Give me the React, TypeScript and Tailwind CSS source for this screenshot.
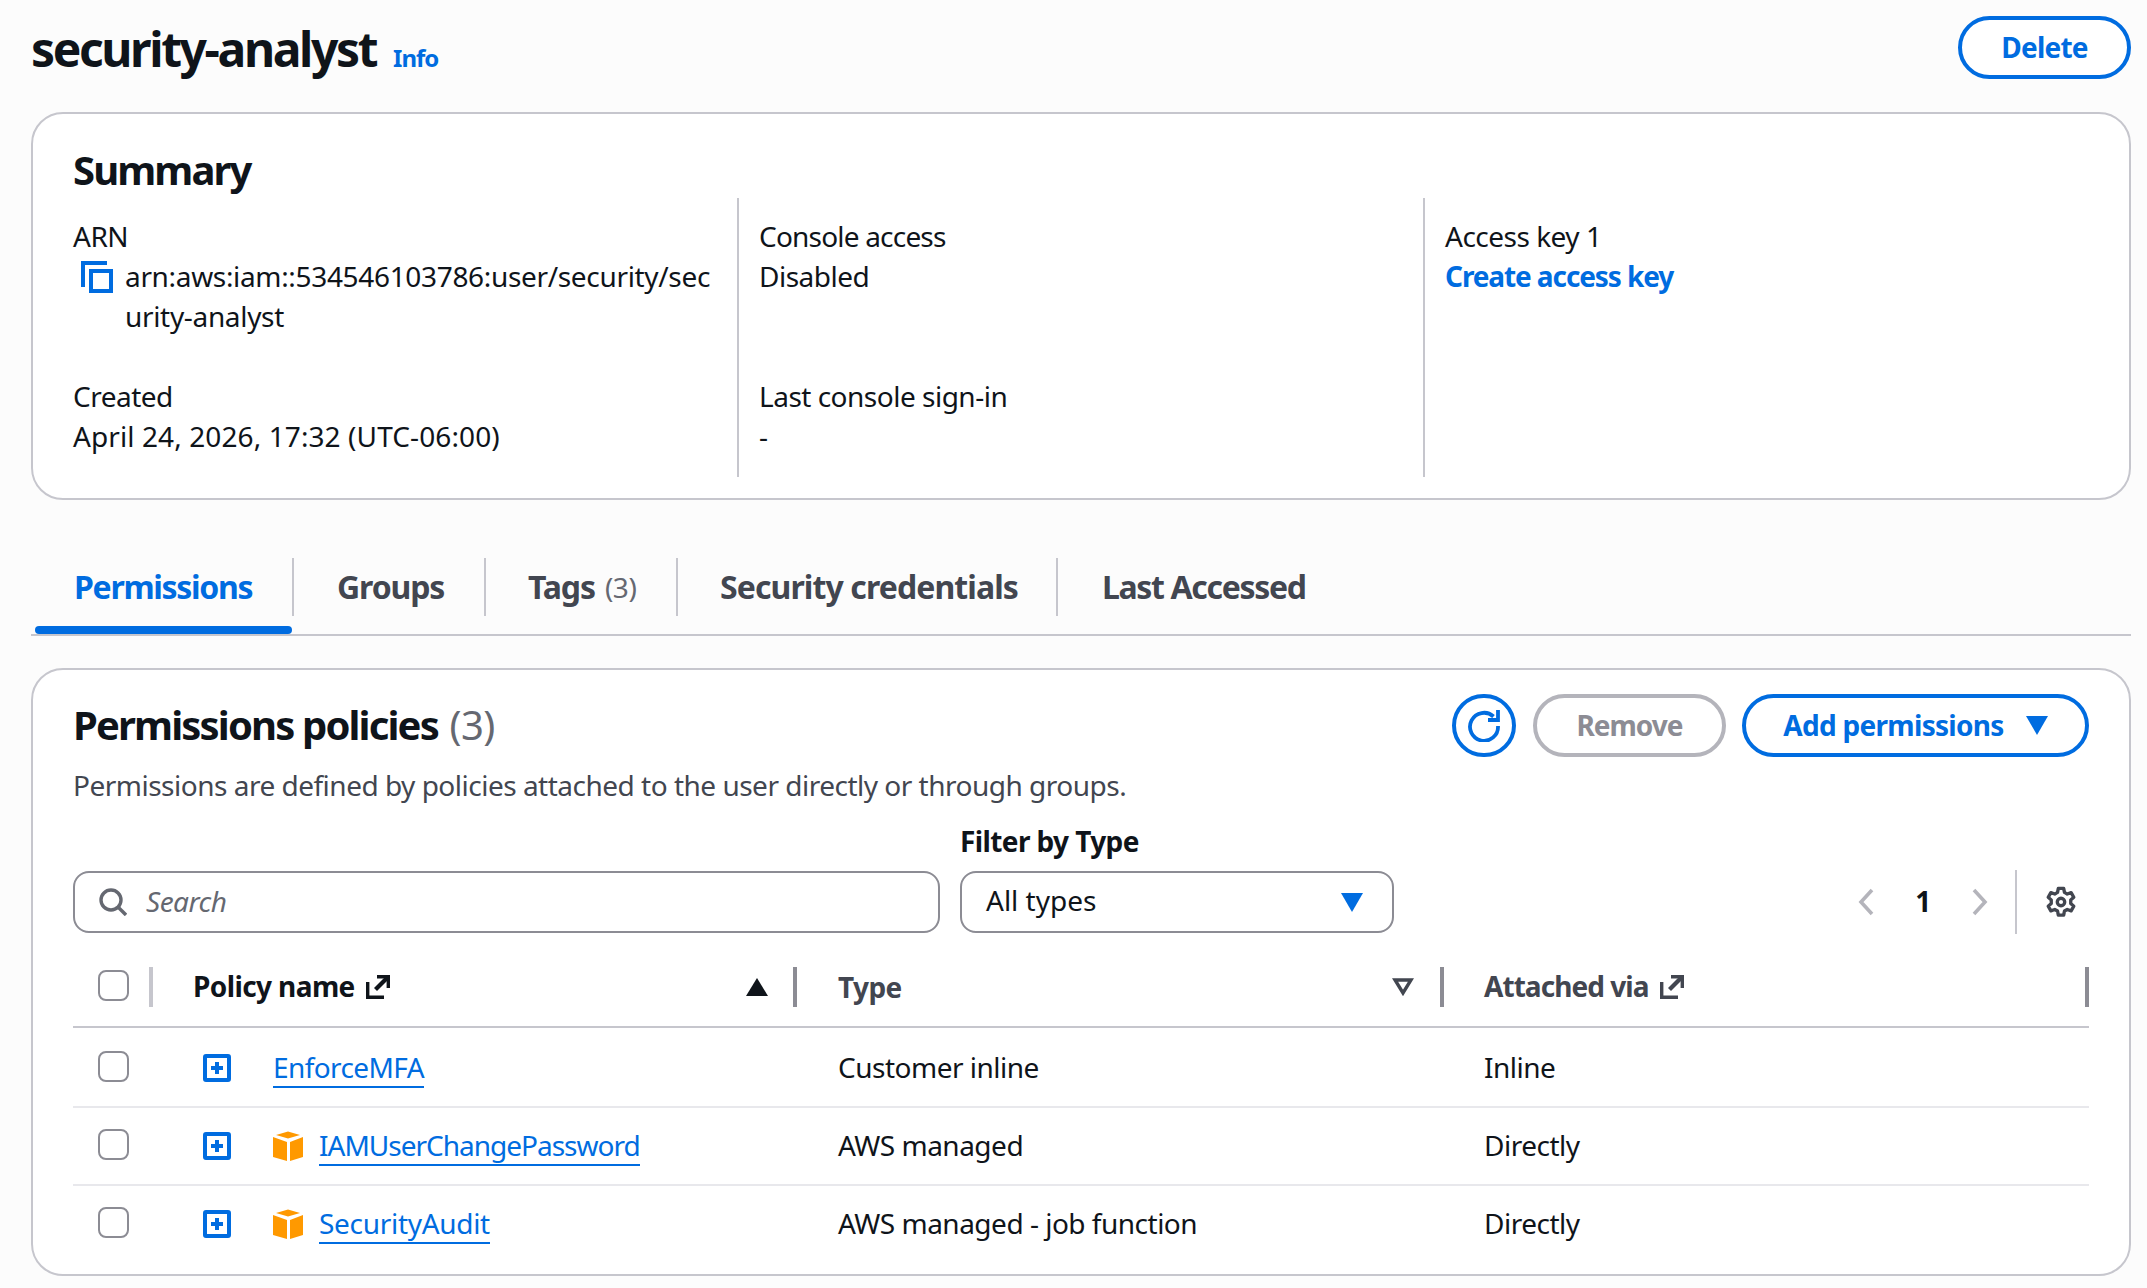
import React from "react";

const Blue = "#006ce0";

function Caret({ className = "", color = Blue, up = false }: { className?: string; color?: string; up?: boolean }) {
  return (
    <svg width="22" height="19" viewBox="0 0 22 19" className={className}>
      <path d={up ? "M0 18h22L11 0z" : "M0 0h22L11 19z"} fill={color} />
    </svg>
  );
}

function ExternalIcon({ color = "#0f141a" }: { color?: string }) {
  return (
    <svg width="24" height="24" viewBox="0 0 24 24" fill="none" stroke={color} strokeWidth="3.4" className="ml-[11px] shrink-0">
      <path d="M1.7 7V22.3H18" />
      <path d="M11 1.7H22.3V13" />
      <path d="M21.5 2.5L9.5 14.5" strokeWidth="4.2" />
    </svg>
  );
}

function CopyIcon() {
  return (
    <svg width="32" height="32" viewBox="0 0 32 32" fill="none" stroke={Blue} strokeWidth="4" className="shrink-0">
      <path d="M2 26V2h24" />
      <rect x="10" y="10" width="20" height="20" />
    </svg>
  );
}

function PlusBox() {
  return (
    <svg width="28" height="28" viewBox="0 0 28 28" fill="none" className="shrink-0">
      <rect x="2" y="2" width="24" height="24" stroke={Blue} strokeWidth="4" rx="1" />
      <path d="M14 8v12M8 14h12" stroke={Blue} strokeWidth="4" />
    </svg>
  );
}

function Cube() {
  return (
    <svg width="30" height="30" viewBox="0 0 30 30" className="shrink-0">
      <path d="M15 .5L27 4 15 7.5 3 4z" fill="#ff9900" />
      <path d="M0 6l14 5v19l-14-4z" fill="#ff9900" />
      <path d="M30 6l-13 5v19l13-4z" fill="#ff9900" />
    </svg>
  );
}

function Refresh() {
  return (
    <svg width="32" height="32" viewBox="0 0 32 32" fill="none" stroke={Blue} strokeWidth="3.8">
      <path d="M25.5 6.5A14 14 0 1 0 30 16" />
      <path d="M30 0v10H20" />
    </svg>
  );
}

function SearchIcon() {
  return (
    <svg width="28" height="28" viewBox="0 0 28 28" fill="none" stroke="#656871" strokeWidth="3.4" className="shrink-0">
      <circle cx="12" cy="12" r="10" />
      <path d="M19 19l8 8" />
    </svg>
  );
}

function Gear() {
  return (
    <svg width="32" height="32" viewBox="0 0 24 24" fill="none" stroke="#424650" strokeWidth="2.5" strokeLinejoin="round">
      <path d="M10 1.8h4l.6 3 2.1 1.2 2.9-1 2 3.5-2.3 2v2.6l2.3 2-2 3.5-2.9-1-2.1 1.2-.6 3h-4l-.6-3-2.1-1.2-2.9 1-2-3.5 2.3-2v-2.6l-2.3-2 2-3.5 2.9 1 2.1-1.2z" />
      <circle cx="12" cy="12" r="2.8" />
    </svg>
  );
}

function Chevron({ dir }: { dir: "left" | "right" }) {
  return (
    <svg width="18" height="28" viewBox="0 0 18 28" fill="none" stroke="#b4b4bb" strokeWidth="3.6">
      <path d={dir === "left" ? "M15 2L4 14l11 12" : "M3 2l11 12L3 26"} />
    </svg>
  );
}

function Checkbox() {
  return <span className="block w-[31px] h-[31px] rounded-[8px] border-2 border-[#8c8c94] bg-white mb-[3px]" />;
}

const tabs = [
  { label: "Permissions", active: true, cls: "w-[263px] pl-[43px] tracking-[-1.3px]" },
  { label: "Groups", cls: "w-[192px] pl-[43px]" },
  { label: "Tags", count: "(3)", cls: "w-[192px] pl-[42px]" },
  { label: "Security credentials", cls: "w-[380px] pl-[42px] tracking-[-0.9px]" },
  { label: "Last Accessed", cls: "pl-[44px] tracking-[-1.35px]" },
];

const rows = [
  { name: "EnforceMFA", type: "Customer inline", via: "Inline", cube: false, cls: "h-[80px] pt-[2px] border-b-2 border-[#e8e8ec]", link: "tracking-[-0.6px]" },
  { name: "IAMUserChangePassword", type: "AWS managed", via: "Directly", cube: true, cls: "h-[78px] border-b-2 border-[#e8e8ec]", link: "tracking-[-1px]" },
  { name: "SecurityAudit", type: "AWS managed - job function", via: "Directly", cube: true, cls: "h-[78px] pb-[2px]", link: "tracking-[-0.3px]" },
];

export default function App() {
  return (
    <div
      className="w-[2147px] h-[1288px] overflow-hidden bg-[#fcfcfc] text-[#0f141a] text-[28px] leading-[40px] tracking-[-0.5px] pl-[31px] pr-[16px]"
      style={{ fontFamily: '"Noto Sans", sans-serif' }}
    >
      {/* Header */}
      <div className="flex items-start justify-between pt-[16px] h-[112px]">
        <div className="flex items-baseline gap-[17px] h-[63px] leading-[66px]">
          <h1 className="text-[48px] font-bold tracking-[-2.4px]">security-analyst</h1>
          <a className="text-[24px] font-bold tracking-[-1px] text-[#006ce0]">Info</a>
        </div>
        <button className="w-[173px] h-[63px] pb-[2px] rounded-full border-4 border-[#006ce0] bg-white text-[#006ce0] font-bold tracking-[-0.8px]">Delete</button>
      </div>

      {/* Summary */}
      <section className="h-[388px] rounded-[32px] border-2 border-[#c6c6cd] bg-white px-[40px] pt-[32px]">
        <h2 className="text-[40px] leading-[48px] font-bold h-[52px] tracking-[-1.9px]">Summary</h2>
        <div className="grid grid-cols-[664px_686px_1fr] h-[279px]">
          <div className="flex flex-col gap-[40px] py-[18px] pr-[20px]">
            <div>
              <div>ARN</div>
              <div className="flex gap-[12px] pl-[8px]">
                <span className="pt-[5px]"><CopyIcon /></span>
                <span className="tracking-[-0.33px] whitespace-nowrap">
                  arn:aws:iam::534546103786:user/security/sec<br />urity-analyst
                </span>
              </div>
            </div>
            <div>
              <div>Created</div>
              <div className="tracking-[0.1px]">April 24, 2026, 17:32 (UTC-06:00)</div>
            </div>
          </div>
          <div className="flex flex-col gap-[40px] py-[18px] pl-[20px] border-l-2 border-[#c6c6cd]">
            <div className="h-[120px]">
              <div className="tracking-[-0.8px]">Console access</div>
              <div>Disabled</div>
            </div>
            <div>
              <div>Last console sign-in</div>
              <div>-</div>
            </div>
          </div>
          <div className="py-[18px] pl-[20px] border-l-2 border-[#c6c6cd]">
            <div>Access key 1</div>
            <a className="font-bold text-[#006ce0] tracking-[-1.1px]">Create access key</a>
          </div>
        </div>
      </section>

      {/* Tabs */}
      <div className="relative mt-[51px] h-[85px] flex items-start border-b-2 border-[#c6c6cd] text-[#424650] text-[32px] font-bold tracking-[-1.1px]">
        {tabs.map((t, i) => (
          <div key={t.label} className={`h-[58px] mt-[7px] flex items-center ${t.cls} ${i < 4 ? "border-r-2 border-[#c6c6cd]" : ""}`}>
            <span className={t.active ? "text-[#006ce0]" : ""}>{t.label}</span>
            {t.count && <span className="ml-[10px] font-normal text-[28px] tracking-[-0.5px] text-[#656871]">{t.count}</span>}
          </div>
        ))}
        <span className="absolute left-[4px] bottom-0 w-[257px] h-[8px] rounded-full bg-[#006ce0]" />
      </div>

      {/* Permissions */}
      <section className="mt-[32px] h-[608px] rounded-[32px] border-2 border-[#c6c6cd] bg-white px-[40px] pt-[24px]">
        <div className="flex items-center justify-between h-[63px]">
          <h2 className="text-[40px] font-bold tracking-[-1.85px] pb-[2px]">
            Permissions policies <span className="ml-[3px] font-normal tracking-[-0.5px] text-[#656871]">(3)</span>
          </h2>
          <div className="flex items-center">
            <button className="w-[64px] h-[63px] rounded-full border-4 border-[#006ce0] flex items-center justify-center bg-white"><Refresh /></button>
            <button className="ml-[17px] w-[193px] h-[63px] pb-[2px] rounded-full border-4 border-[#b4b4bb] text-[#8c8c94] font-bold tracking-[-1px] bg-white">Remove</button>
            <button className="ml-[16px] w-[347px] h-[63px] rounded-full border-4 border-[#006ce0] text-[#006ce0] font-bold tracking-[-0.7px] bg-white flex items-center justify-center gap-[22px]">
              <span className="pb-[2px]">Add permissions</span> <Caret />
            </button>
          </div>
        </div>
        <p className="mt-[8px] h-[40px] text-[#424650]">Permissions are defined by policies attached to the user directly or through groups.</p>

        <div className="mt-[16px] h-[40px] pl-[887px] font-bold tracking-[-0.6px]">Filter by Type</div>
        <div className="mt-[10px] h-[62px] flex items-center">
          <div className="w-[867px] h-[62px] rounded-[16px] border-2 border-[#8c8c94] flex items-center pl-[24px] gap-[19px] bg-white">
            <SearchIcon />
            <span className="italic text-[#656871] pb-[2px]">Search</span>
          </div>
          <div className="ml-[20px] w-[434px] h-[62px] rounded-[16px] border-2 border-[#8c8c94] flex items-center justify-between pl-[24px] pr-[29px] bg-white">
            <span className="pb-[4px] tracking-[0px]">All types</span>
            <Caret />
          </div>
          <div className="ml-auto h-[64px] flex items-center">
            <Chevron dir="left" />
            <span className="w-[96px] text-center font-bold pb-[2px]">1</span>
            <Chevron dir="right" />
            <span className="ml-[26px] h-[64px] border-l-2 border-[#c6c6cd]" />
            <span className="ml-[28px] mr-[12px]"><Gear /></span>
          </div>
        </div>

        {/* Table */}
        <div className="mt-[15px] h-[80px] grid grid-cols-[80px_644px_647px_645px] border-b-2 border-[#c6c6cd] items-center font-bold tracking-[-0.6px] text-[#424650]">
          <div className="flex items-center justify-between">
            <span className="ml-[25px]"><Checkbox /></span>
            <span className="h-[40px] border-r-4 border-[#c6c6cd]" />
          </div>
          <div className="flex items-center pl-[40px] text-[#0f141a]">
            <span className="pb-[2px]">Policy name</span> <ExternalIcon />
            <Caret up className="ml-auto mr-[25px]" color="#0f141a" />
            <span className="h-[40px] border-r-4 border-[#8c8c94]" />
          </div>
          <div className="flex items-center pl-[41px]">
            <span>Type</span>
            <svg width="22" height="18" viewBox="0 0 22 18" fill="none" stroke="#424650" strokeWidth="3.4" className="ml-auto mr-[26px]"><path d="M3 2h16L11 15z" /></svg>
            <span className="h-[40px] border-r-4 border-[#8c8c94]" />
          </div>
          <div className="flex items-center pl-[40px]">
            <span className="pb-[2px] tracking-[-0.95px]">Attached via</span> <ExternalIcon color="#424650" />
            <span className="ml-auto h-[40px] border-r-4 border-[#8c8c94]" />
          </div>
        </div>
        {rows.map((r) => (
          <div key={r.name} className={`grid grid-cols-[80px_644px_647px_645px] items-center ${r.cls}`}>
            <span className="ml-[25px]"><Checkbox /></span>
            <div className="flex items-center pl-[50px]">
              <PlusBox />
              <span className="ml-[42px] flex items-center">
                {r.cube && <span className="mr-[16px]"><Cube /></span>}
                <a className={`text-[#006ce0] border-b-2 border-[#006ce0] leading-[37px] ${r.link}`}>{r.name}</a>
              </span>
            </div>
            <div className="pl-[41px] pb-[2px]">{r.type}</div>
            <div className="pl-[40px] pb-[2px]">{r.via}</div>
          </div>
        ))}
      </section>
    </div>
  );
}
